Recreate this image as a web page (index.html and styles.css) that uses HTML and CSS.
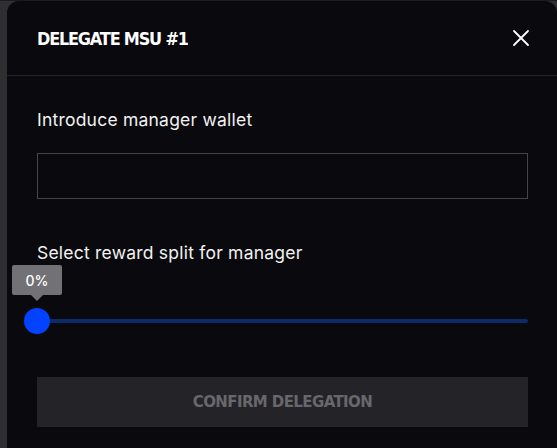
FILE: index.html
```html
<!DOCTYPE html>
<html>
<head>
<meta charset="utf-8">
<link rel="stylesheet" href="styles.css">
</head>
<body>
<div class="page">
  <div class="modal">
    <div class="header">
      <h1 class="title">DELEGATE MSU #1</h1>
      <button class="close" aria-label="Close">
        <svg width="18" height="18" viewBox="0 0 18 18"><path d="M2 2L16 16M16 2L2 16" stroke="#fff" stroke-width="1.8" stroke-linecap="round"/></svg>
      </button>
    </div>
    <div class="body">
      <label class="label">Introduce manager wallet</label>
      <input class="input" type="text">
      <label class="label label-split">Select reward split for manager</label>
      <div class="slider">
        <div class="track"></div>
        <div class="thumb"></div>
        <div class="tip">0%</div>
      </div>
      <button class="confirm">CONFIRM DELEGATION</button>
    </div>
  </div>
</div>
</body>
</html>
```
FILE: styles.css
```css
html, body { margin: 0; padding: 0; }
body {
  background: #2f2f31;
  width: 557px;
  height: 448px;
  overflow: hidden;
  font-family: "Inter", "DejaVu Sans", sans-serif;
}
.page {
  padding: 1px 0 0 7px;
  background: linear-gradient(#1c1c1f, #1c1c1f) top / 100% 1px no-repeat, #2f2f31;
  height: 447px;
}
.modal {
  background: #0a090d;
  border-radius: 12px 12px 0 0;
  height: 447px;
  box-sizing: border-box;
}
.header {
  height: 75px;
  border-bottom: 1px solid #232228;
  display: flex;
  align-items: center;
  justify-content: space-between;
  padding: 0 27px 0 30px;
  box-sizing: border-box;
}
.title {
  margin: 0;
  padding-top: 2px;
  color: #fff;
  font-family: "DejaVu Sans", sans-serif;
  font-weight: bold;
  font-size: 17.5px;
  letter-spacing: -1.3px;
  transform: scaleX(0.92);
  transform-origin: left center;
}
.close {
  background: none;
  border: 0;
  padding: 0;
  width: 18px;
  height: 18px;
  display: flex;
  cursor: pointer;
}
.body {
  padding: 33px 29px 0 30px;
  display: flex;
  flex-direction: column;
}
.label {
  color: #f2f2f2;
  font-size: 17.5px;
  line-height: 22px;
  letter-spacing: 0.22px;
}
.input {
  margin-top: 22px;
  height: 46px;
  box-sizing: border-box;
  background: transparent;
  border: 1px solid #45444a;
  border-radius: 0;
  outline: none;
}
.label-split { margin-top: 43px; }
.slider {
  position: relative;
  height: 66px;
}
.track {
  position: absolute;
  left: 0;
  right: 0;
  top: 55px;
  height: 4px;
  background: #0c2a6c;
  border-radius: 2px;
}
.thumb {
  position: absolute;
  left: -13px;
  top: 44px;
  width: 26px;
  height: 26px;
  border-radius: 50%;
  background: #0342ff;
}
.tip {
  position: absolute;
  left: -25px;
  top: 1px;
  width: 50px;
  height: 30px;
  background: #727176;
  border-radius: 2px;
  color: #fff;
  font-size: 14px;
  font-weight: 500;
  display: flex;
  align-items: center;
  justify-content: center;
}
.tip::after {
  content: "";
  position: absolute;
  left: 19px;
  bottom: -6px;
  border-left: 6px solid transparent;
  border-right: 6px solid transparent;
  border-top: 6px solid #727176;
}
.confirm {
  margin-top: 47px;
  height: 50px;
  border: 0;
  background: #242328;
  color: #68676d;
  font-family: "DejaVu Sans", sans-serif;
  font-weight: bold;
  font-size: 15px;
  letter-spacing: -0.6px;
}
```
